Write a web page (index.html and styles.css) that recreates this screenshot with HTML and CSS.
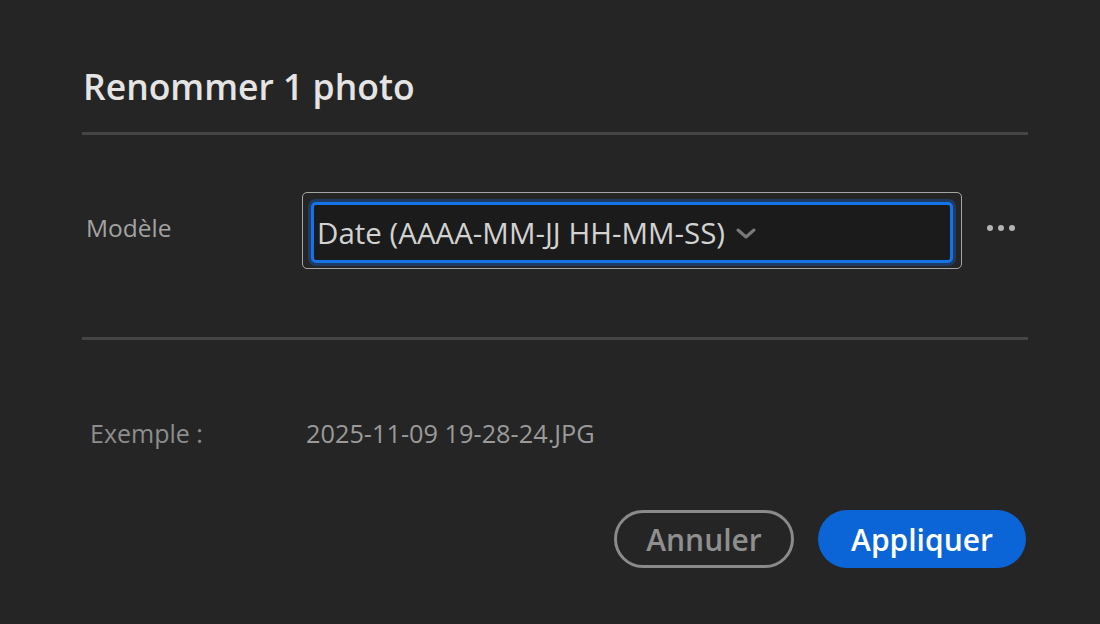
FILE: index.html
```html
<!DOCTYPE html>
<html lang="fr">
<head>
<meta charset="utf-8">
<title>Renommer 1 photo</title>
<link rel="stylesheet" href="styles.css">
</head>
<body>
<div class="dialog">
  <h1 class="title">Renommer 1 photo</h1>
  <div class="divider"></div>
  <div class="form-row">
    <div class="label">Modèle</div>
    <div class="select">
      <div class="select-field">
        <span class="select-text">Date (AAAA-MM-JJ HH-MM-SS)</span>
        <svg class="chevron" width="20" height="12" viewBox="0 0 20 12"><path d="M2 2 L10 9 L18 2" fill="none" stroke="#7a7a7a" stroke-width="3" stroke-linecap="round" stroke-linejoin="round"/></svg>
      </div>
    </div>
    <div class="more">
      <span class="dot"></span><span class="dot"></span><span class="dot"></span>
    </div>
  </div>
  <div class="divider divider-2"></div>
  <div class="example-row">
    <div class="example-label">Exemple :</div>
    <div class="example-value">2025-11-09 19-28-24.JPG</div>
  </div>
  <div class="actions">
    <button class="btn btn-cancel">Annuler</button>
    <button class="btn btn-apply">Appliquer</button>
  </div>
</div>
</body>
</html>
```
FILE: styles.css
```css
html, body {
  margin: 0;
  padding: 0;
  background: #252525;
}
body {
  width: 1100px;
  height: 624px;
  overflow: hidden;
  font-family: "Open Sans", "Noto Sans", sans-serif;
}
.dialog {
  padding: 0 72px 0 82px;
}
.title {
  margin: 0;
  padding: 62px 0 0 1px;
  font-size: 35.5px;
  line-height: 48px;
  font-weight: 600;
  color: #e4e4e4;
}
.divider {
  margin-top: 22px;
  height: 3px;
  background: #454545;
}
.form-row {
  display: flex;
  align-items: center;
  margin-top: 57px;
}
.label {
  width: 220px;
  padding-left: 4px;
  box-sizing: border-box;
  font-size: 24.5px;
  color: #a3a3a3;
  margin-top: -6px;
}
.select {
  width: 660px;
  height: 77px;
  box-sizing: border-box;
  border: 1.5px solid #a5a5a5;
  border-radius: 5px;
  padding: 9px 8px 5px 8px;
  display: flex;
}
.select-field {
  flex: 1;
  border: 3px solid #1473e6;
  border-radius: 5px;
  box-shadow: 0 0 0 3px #1f3b63;
  background: #1b1b1b;
  display: flex;
  align-items: center;
  padding-left: 3px;
}
.select-text {
  font-size: 29.5px;
  color: #d2d2d2;
}
.chevron {
  margin-left: 11px;
  margin-top: 2px;
}
.more {
  margin-left: auto;
  margin-right: 13px;
  display: flex;
  gap: 5px;
  margin-top: -6px;
}
.dot {
  width: 6px;
  height: 6px;
  border-radius: 50%;
  background: #b4b4b4;
}
.divider-2 {
  margin-top: 68px;
}
.example-row {
  display: flex;
  align-items: center;
  margin-top: 76px;
}
.example-label {
  width: 224px;
  padding-left: 8px;
  box-sizing: border-box;
  font-size: 25px;
  color: #8d8d8d;
}
.example-value {
  font-size: 25.3px;
  color: #9a9a9a;
}
.actions {
  display: flex;
  justify-content: flex-end;
  gap: 24px;
  margin-top: 60px;
  padding-right: 2px;
}
.btn {
  height: 58px;
  border-radius: 29px;
  font-family: inherit;
  font-size: 30px;
  font-weight: 600;
  box-sizing: border-box;
  padding: 0;
  cursor: pointer;
}
.btn-cancel {
  width: 180px;
  border: 3px solid #8a8a8a;
  background: transparent;
  color: #8f8f8f;
}
.btn-apply {
  width: 208px;
  border: none;
  background: #0b65d6;
  color: #ffffff;
}
```
